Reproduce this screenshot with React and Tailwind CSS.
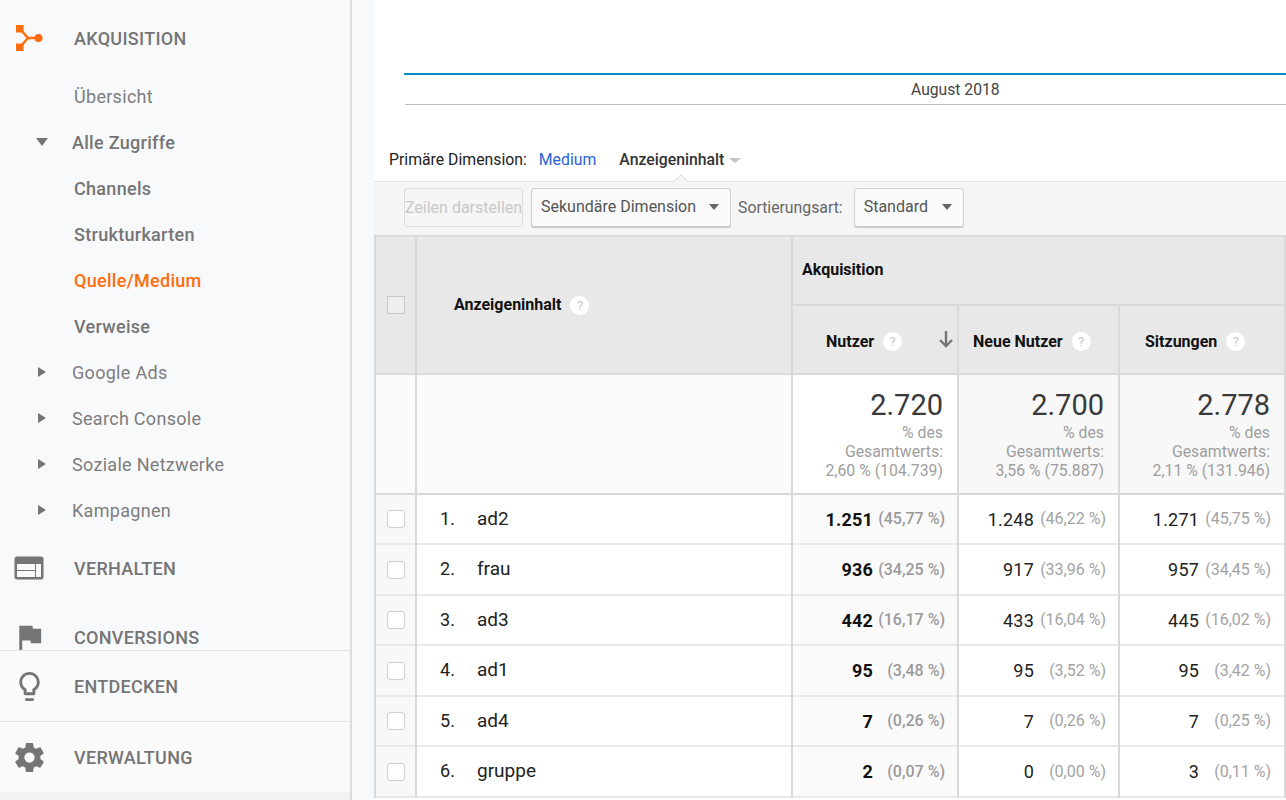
import React from 'react';

const GRAY = '#757575';

const AcquisitionIcon = () => (
  <svg width="28" height="27" viewBox="0 0 28 27">
    <rect x="1" y="0" width="7.5" height="7.5" fill="#ff6d0c" />
    <rect x="1" y="18.5" width="7.5" height="7.5" fill="#ff6d0c" />
    <circle cx="23.5" cy="13" r="4" fill="#ff6d0c" />
    <path d="M5 4l8 9-8 9M13 13h9" fill="none" stroke="#ff6d0c" strokeWidth="2.4" />
  </svg>
);

const BehaviorIcon = () => (
  <svg width="30" height="24" viewBox="0 0 30 24">
    <rect x="0.5" y="0.5" width="29" height="23" rx="2.5" fill={GRAY} />
    <rect x="3" y="8" width="18" height="6" fill="#f8f9fb" />
    <rect x="3" y="15" width="18" height="6" fill="#f8f9fb" />
    <rect x="22" y="8" width="5" height="13" fill="#f8f9fb" />
  </svg>
);

const FlagIcon = () => (
  <svg width="35" height="35" viewBox="0 0 24 24" fill={GRAY}>
    <path d="M14.4 6L14 4H5v17h2v-7h5.6l.4 2h7V6z" />
  </svg>
);

const BulbIcon = () => (
  <svg width="35" height="35" viewBox="0 0 24 24" fill={GRAY}>
    <path d="M9 21c0 .55.45 1 1 1h4c.55 0 1-.45 1-1v-1H9v1zm3-19C8.14 2 5 5.14 5 9c0 2.38 1.19 4.47 3 5.74V17c0 .55.45 1 1 1h6c.55 0 1-.45 1-1v-2.26c1.81-1.27 3-3.36 3-5.74 0-3.86-3.14-7-7-7zm2.85 11.1l-.85.6V16h-4v-2.3l-.85-.6C7.8 12.16 7 10.63 7 9c0-2.76 2.24-5 5-5s5 2.24 5 5c0 1.63-.8 3.16-2.15 4.1z" />
  </svg>
);

const GearIcon = () => (
  <svg width="35" height="35" viewBox="0 0 24 24" fill={GRAY}>
    <path d="M19.43 12.98c.04-.32.07-.64.07-.98s-.03-.66-.07-.98l2.11-1.65c.19-.15.24-.42.12-.64l-2-3.46c-.12-.22-.39-.3-.61-.22l-2.49 1c-.52-.4-1.08-.73-1.69-.98l-.38-2.65C14.46 2.18 14.25 2 14 2h-4c-.25 0-.46.18-.49.42l-.38 2.65c-.61.25-1.17.59-1.69.98l-2.49-1c-.23-.09-.49 0-.61.22l-2 3.46c-.13.22-.07.49.12.64l2.11 1.65c-.04.32-.07.65-.07.98s.03.66.07.98l-2.11 1.65c-.19.15-.24.42-.12.64l2 3.46c.12.22.39.3.61.22l2.49-1c.52.4 1.08.73 1.69.98l.38 2.65c.03.24.24.42.49.42h4c.25 0 .46-.18.49-.42l.38-2.65c.61-.25 1.17-.59 1.69-.98l2.49 1c.23.09.49 0 .61-.22l2-3.46c.12-.22.07-.49-.12-.64l-2.11-1.65zM12 15.5c-1.93 0-3.5-1.57-3.5-3.5s1.57-3.5 3.5-3.5 3.5 1.57 3.5 3.5-1.57 3.5-3.5 3.5z" />
  </svg>
);

const Section = ({ icon, label }) => (
  <div className="flex h-[46px] shrink-0 items-center">
    <div className="flex w-[58px] justify-center">{icon}</div>
    <span className="ml-4 text-[18px] font-medium tracking-[0.3px] text-[#757575]">{label}</span>
  </div>
);

const NavItem = ({ label, arrow, active, strong }) => (
  <div className="flex h-[46px] shrink-0 items-center">
    <div className={`flex justify-center pl-[11px] ${arrow ? 'w-[72px]' : 'w-[74px]'}`}>
      {arrow === 'down' && <span className="h-0 w-0 border-x-[6px] border-t-[8px] border-x-transparent border-t-[#757575]" />}
      {arrow === 'right' && <span className="h-0 w-0 border-y-[5px] border-l-[8px] border-y-transparent border-l-[#757575]" />}
    </div>
    <span className={`text-[18px] tracking-[0.3px] ${active ? 'font-medium text-[#ff6d0c]' : strong ? 'font-medium text-[#757575]' : 'text-[#7d7d7d]'}`}>{label}</span>
  </div>
);

const Sidebar = () => (
  <aside className="flex h-full w-[352px] shrink-0 flex-col border-r-2 border-[#dcdcdc] bg-[#f8f9fb]">
    <div className="flex h-[650px] shrink-0 flex-col overflow-hidden pt-[15px]">
      <Section icon={<AcquisitionIcon />} label="AKQUISITION" />
      <div className="mt-3 flex flex-col">
        <NavItem label="Übersicht" />
        <NavItem label="Alle Zugriffe" arrow="down" strong />
        <NavItem label="Channels" strong />
        <NavItem label="Strukturkarten" strong />
        <NavItem label="Quelle/Medium" active />
        <NavItem label="Verweise" strong />
        <NavItem label="Google Ads" arrow="right" />
        <NavItem label="Search Console" arrow="right" />
        <NavItem label="Soziale Netzwerke" arrow="right" />
        <NavItem label="Kampagnen" arrow="right" />
      </div>
      <div className="mt-3"><Section icon={<BehaviorIcon />} label="VERHALTEN" /></div>
      <div className="mt-[23px]"><Section icon={<FlagIcon />} label="CONVERSIONS" /></div>
    </div>
    <div className="flex h-[71px] shrink-0 items-center border-t border-[#e2e2e2] bg-[#fafafa]">
      <Section icon={<BulbIcon />} label="ENTDECKEN" />
    </div>
    <div className="flex h-[71px] shrink-0 items-center border-t border-[#e2e2e2] bg-[#fafafa]">
      <Section icon={<GearIcon />} label="VERWALTUNG" />
    </div>
    <div className="flex-1 bg-[#f0f2f4]" />
  </aside>
);

const Help = () => (
  <span className="ml-[9px] inline-flex h-[19px] w-[19px] items-center justify-center rounded-full bg-white text-[13px] font-normal leading-none text-[#c8c8c8]">?</span>
);

const Caret = () => (
  <span className="h-0 w-0 border-x-[5px] border-t-[6px] border-x-transparent border-t-[#666]" />
);

const Dropdown = ({ label, className }) => (
  <div className={`flex h-[39px] items-center justify-between rounded-[3px] border border-[#cfcfcf] bg-[#fafafa] pb-[2px] pl-[9px] pr-[11px] text-[16px] text-[#555] shadow-[0_1px_0_#c8c8c8] ${className}`}>
    {label}
    <Caret />
  </div>
);

const rows = [
  ['1.', 'ad2', '1.251', '(45,77 %)', '1.248', '(46,22 %)', '1.271', '(45,75 %)'],
  ['2.', 'frau', '936', '(34,25 %)', '917', '(33,96 %)', '957', '(34,45 %)'],
  ['3.', 'ad3', '442', '(16,17 %)', '433', '(16,04 %)', '445', '(16,02 %)'],
  ['4.', 'ad1', '95', '(3,48 %)', '95', '(3,52 %)', '95', '(3,42 %)'],
  ['5.', 'ad4', '7', '(0,26 %)', '7', '(0,26 %)', '7', '(0,25 %)'],
  ['6.', 'gruppe', '2', '(0,07 %)', '0', '(0,00 %)', '3', '(0,11 %)'],
];

const Metric = ({ value, pct, bold, right }) => (
  <div className={`flex items-center justify-end ${right}`}>
    <span className={`text-[18px] tracking-[0.2px] ${bold ? 'font-bold text-[#111]' : 'text-[#222]'}`}>{value}</span>
    <span className={`w-[72px] text-right text-[16px] ${bold ? 'font-medium text-[#9a9a9a]' : 'text-[#a3a3a3]'}`}>{pct}</span>
  </div>
);

const Total = ({ value, pct, bg }) => (
  <td className={`border-2 border-[#d9d9d9] pr-[14px] text-right align-top ${bg}`}>
    <div className="mt-[13px] text-[29px] leading-[35px] text-[#3a3a3a]">{value}</div>
    <div className="text-[15.8px] leading-[19px] text-[#9e9e9e]">
      % des<br />Gesamtwerts:<br />{pct}
    </div>
  </td>
);

const headCell = 'border-2 border-[#d9d9d9] bg-[#e8e8e8] text-[16px] font-bold text-[#111]';

const DataTable = () => (
  <table className="w-[910px] table-fixed border-collapse">
    <colgroup>
      <col className="w-[41px]" />
      <col className="w-[376px]" />
      <col className="w-[166px]" />
      <col className="w-[161px]" />
      <col className="w-[166px]" />
    </colgroup>
    <thead>
      <tr className="h-[69px]">
        <th rowSpan={2} className={headCell}>
          <span className="mx-auto block h-[18px] w-[18px] border border-[#c9c9c9] bg-[#eee]" />
        </th>
        <th rowSpan={2} className={`${headCell} pl-[37px] text-left`}>
          <span className="flex items-center">Anzeigeninhalt<Help /></span>
        </th>
        <th colSpan={3} className={`${headCell} pb-[2px] pl-[9px] text-left`}>Akquisition</th>
      </tr>
      <tr className="h-[69px]">
        <th className={headCell}>
          <div className="flex items-center pl-[33px] pr-[3px] pt-[4px]">
            Nutzer<Help />
            <svg className="ml-auto -translate-y-[3px]" width="16" height="18" viewBox="0 0 16 18" fill="none" stroke="#757575" strokeWidth="2.4">
              <path d="M8 1v15M2 10l6 6 6-6" />
            </svg>
          </div>
        </th>
        <th className={headCell}>
          <div className="flex items-center pl-[14px] pt-[4px]">Neue Nutzer<Help /></div>
        </th>
        <th className={headCell}>
          <div className="flex items-center pl-[25px] pt-[4px]">Sitzungen<Help /></div>
        </th>
      </tr>
    </thead>
    <tbody>
      <tr className="h-[120px]">
        <td className="border-2 border-[#d9d9d9] bg-[#fafafa]" />
        <td className="border-2 border-[#d9d9d9] bg-[#fafafa]" />
        <Total value="2.720" pct="2,60 % (104.739)" bg="bg-white" />
        <Total value="2.700" pct="3,56 % (75.887)" bg="bg-[#f8f8f8]" />
        <Total value="2.778" pct="2,11 % (131.946)" bg="bg-[#f8f8f8]" />
      </tr>
      {rows.map((r, i) => (
        <tr key={r[0]} className={`border-y-2 border-[#e9e9e9] ${i % 2 === 0 ? 'h-[50px]' : 'h-[51px]'}`}>
          <td className="border-x-2 border-[#d9d9d9] bg-[#f8f8f8]">
            <span className="mx-auto block h-[18px] w-[18px] rounded-[3px] border border-[#cfcfcf] bg-white" />
          </td>
          <td className="border-x-2 border-[#d9d9d9] bg-white text-[19px] text-[#222]">
            <div className="flex pl-[23px]">
              <span className="w-[37px] text-[18px] tracking-[0.2px]">{r[0]}</span>
              <span>{r[1]}</span>
            </div>
          </td>
          <td className="border-x-2 border-[#d9d9d9] bg-[#fafafa]">
            <Metric value={r[2]} pct={r[3]} bold right="pr-[12px]" />
          </td>
          <td className="border-x-2 border-[#d9d9d9] bg-white">
            <Metric value={r[4]} pct={r[5]} right="pr-[12px]" />
          </td>
          <td className="border-x-2 border-[#d9d9d9] bg-white">
            <Metric value={r[6]} pct={r[7]} right="pr-[13px]" />
          </td>
        </tr>
      ))}
    </tbody>
  </table>
);

const Main = () => (
  <main className="ml-[22px] h-full min-w-0 flex-1 overflow-hidden bg-white">
    {/* chart stub */}
    <div className="ml-[30px] mt-[73px] h-[2px] bg-[#058dc7]" />
    <div className="ml-[31px] flex h-[30px] items-center border-b border-[#bdbdbd] pl-[506px] pt-[1px] text-[15.7px] text-[#444]">August 2018</div>

    <div className="relative flex h-[76px] items-center pl-[15px] pt-[34px] text-[15.8px]">
      <span className="text-[#222]">Primäre Dimension:</span>
      <span className="ml-3 text-[#2a62d6]">Medium</span>
      <span className="ml-[23px] font-medium text-[#333]">Anzeigeninhalt</span>
      <span className="ml-[5px] h-0 w-0 border-x-[6px] border-t-[5px] border-x-transparent border-t-[#c4c4c4]" />
      <span className="absolute bottom-[-5px] left-[302px] h-[10px] w-[10px] rotate-45 border-l border-t border-[#e2e2e2] bg-[#f5f5f5]" />
    </div>

    <div className="flex h-[54px] items-center border-t border-[#e4e4e4] bg-[#f5f5f5] pb-[2px] pl-[30px]">
      <div className="flex h-[39px] w-[119px] items-center justify-center whitespace-nowrap rounded-[3px] border border-[#dedede] text-[16px] text-[#c8c8c8]">Zeilen darstellen</div>
      <Dropdown label="Sekundäre Dimension" className="ml-2 w-[200px]" />
      <span className="ml-[7px] text-[15.8px] text-[#666]">Sortierungsart:</span>
      <Dropdown label="Standard" className="ml-[11px] w-[110px]" />
    </div>

    <DataTable />
  </main>
);

export default function App() {
  return (
    <div className="flex h-[800px] w-[1286px] overflow-hidden bg-[#f8f9fb] font-['Roboto',sans-serif]">
      <Sidebar />
      <Main />
    </div>
  );
}
